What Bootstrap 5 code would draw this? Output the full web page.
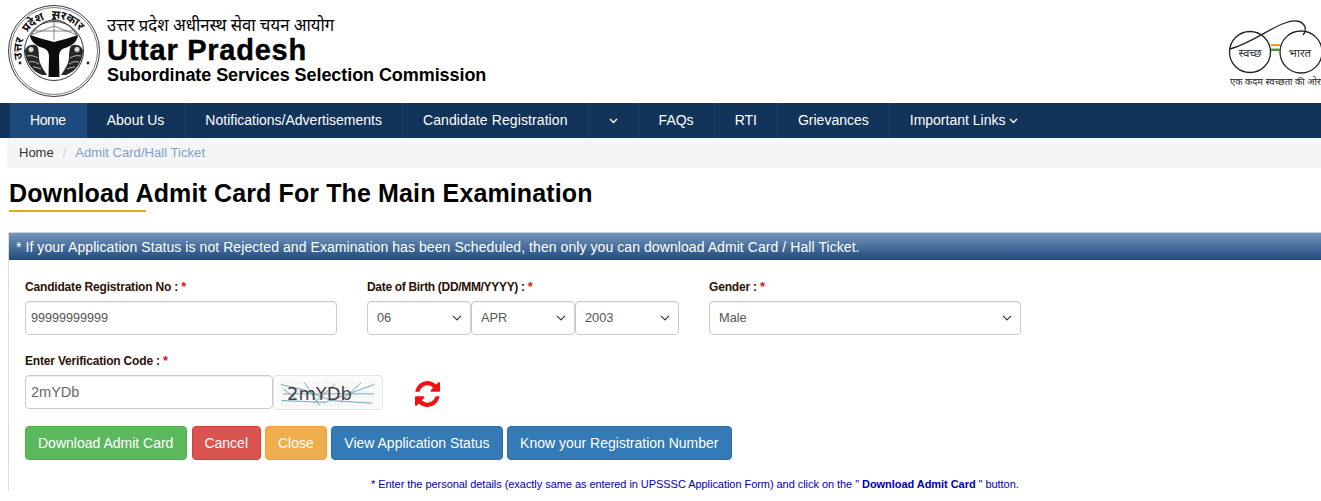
<!DOCTYPE html>
<html>

<head>
    <title>Download Admit Card</title>
    <link href="https://cdn.jsdelivr.net/npm/bootstrap@5.3.0/dist/css/bootstrap.min.css" rel="stylesheet">
    <style>
        html, body { height: 501px; overflow: hidden; }
        body { font-family: "Liberation Sans", Arial, sans-serif; font-size: 14px; color: #333; background: #fff; }

        .site-head { height: 103px; padding: 2px 0 0 5px; }
        .emblem { width: 95px; height: 96px; flex: none; }
        .head-text { margin: 11px 0 0 7px; color: #000; }
        .head-hindi { font-family: "Noto Sans", "Noto Sans CJK SC", sans-serif; font-size: 16.7px; line-height: 24px; }
        .head-state { font-size: 29px; font-weight: 700; line-height: 27px; letter-spacing: .75px; -webkit-text-stroke: .4px #000; }
        .head-org { font-size: 18px; font-weight: 700; line-height: 23px; letter-spacing: -.07px; }
        .swachh { width: 121px; height: 100px; margin-left: auto; flex: none; }

        .main-nav { background: #12335a; height: 35px; padding-left: 10px; }
        .main-nav .nav-link { color: #fff; font-size: 14px; line-height: 35px; padding: 0 20px; border-right: 1px solid #1a3f5e; white-space: nowrap; }
        .main-nav .nav-link.active { background: #1d4a7c; color: #fff; border-right-color: #1d4a7c; letter-spacing: -.4px; }
        .main-nav .nav-link.wide-text { letter-spacing: .1px; }
        .main-nav .nav-item:last-child .nav-link { border-right: 0; }
        .chev { width: 9px; height: 6px; vertical-align: 1px; }

        .crumbs { background: #f5f5f5; height: 30px; margin: 0 0 0 7px; padding: 0 12px; font-size: 13px; line-height: 30px; border-radius: 0 0 0 4px; }
        .crumbs .breadcrumb-item { line-height: 30px; color: #333; }
        .crumbs .breadcrumb-item + .breadcrumb-item { padding-left: 9px; }
        .crumbs .breadcrumb-item + .breadcrumb-item::before { color: #ccc; padding-right: 9px; }
        .crumbs .breadcrumb-item.active { color: #7da0d0; letter-spacing: .05px; }

        .page-title { margin: 0 0 0 9px; padding-top: 10px; height: 65px; margin-bottom: -1px; }
        .page-title h1 { font-size: 25px; font-weight: 700; line-height: 30px; margin: 0; color: #000; letter-spacing: .12px; }
        .title-rule { width: 137px; height: 2px; background: #e8a623; margin-top: 2px; }

        .notice-panel { margin-left: 8px; border-left: 1px solid #ddd; }
        .notice-head { height: 28px; line-height: 28px; padding-left: 7px; color: #fff; font-size: 14px; letter-spacing: .07px; background: linear-gradient(to bottom, #7495bb, #1f4b7e); border-top: 1px solid #c9d4e0; white-space: nowrap; }
        .form-area { padding: 18px 0 0 16px; }

        .fld-label { color: #2a1208; font-size: 12px; font-weight: 700; line-height: 18px; margin: 0 0 5px; display: block; letter-spacing: -.18px; }
        .fld-dob .fld-label { letter-spacing: -.32px; }
        .req { color: #e01010; font-size: 13px; letter-spacing: 0; }
        .fld-row { display: flex; margin-bottom: 17px; }
        .fld-row + .fld-row { margin-bottom: 16px; }
        .fld-reg { width: 312px; margin-right: 30px; }
        .fld-dob { width: 312px; margin-right: 30px; }
        .fld-gender { width: 312px; }
        .form-area .form-control, .form-area .form-select { height: 34px; font-size: 12.6px; color: #555; border: 1px solid #ccc; border-radius: 4px; padding: 0 5px; box-shadow: inset 0 1px 1px rgba(0,0,0,.075); }
        .form-area .form-select { font-size: 12.8px; padding-left: 9px; background-size: 14px 10px; background-position: right 6px center; }
        .dob-row { display: flex; }
        .dob-row .form-select { width: 104px; flex: none; }
        .code-row { display: flex; align-items: flex-start; }
        .form-area .code-input.form-control { width: 248px; flex: none; font-size: 14.5px; color: #666; }
        .captcha { width: 110px; height: 35px; flex: none; border: 1px solid #e4e4e4; border-radius: 4px; display: block; }
        .refresh { width: 25px; height: 26px; margin: 6px 0 0 32px; flex: none; }

        .act-btns { gap: 4.5px; }
        .act-btns .btn { font-size: 14px; height: 34px; line-height: 32px; padding: 0 12px; border-radius: 4px; color: #fff; }
        .act-btns .act-green { background: #5cb85c; border-color: #4cae4c; padding-right: 13px; }
        .act-btns .act-red { background: #d9534f; border-color: #d43f3a; padding: 0 11.5px; }
        .act-amber { background: #f0ad4e; border-color: #eea236; }
        .act-blue { background: #337ab7; border-color: #2e6da4; }
        .note-line { font-size: 11px; color: #0000b0; margin: 17px 0 0 346px; letter-spacing: -.05px; line-height: 14px; white-space: nowrap; }
    </style>
</head>

<body>
    <header class="site-head d-flex">
        <svg class="emblem" viewBox="0 0 95 96">
            <defs>
                <path id="emblemArc" d="M17.800 58 A32.500 32.500 0 1 1 80.200 58" fill="none"/>
            </defs>
            <circle cx="49" cy="49" r="45.500" fill="#fff" stroke="#222" stroke-width=".9"/>
            <circle cx="49" cy="49" r="43.500" fill="none" stroke="#222" stroke-width=".6"/>
            <circle cx="49" cy="49" r="29.500" fill="none" stroke="#222" stroke-width=".9"/>
            <text font-family="Noto Sans, sans-serif" font-size="11.500" font-weight="700" word-spacing="4" fill="#111"><textPath href="#emblemArc" startOffset="1%">उत्तर प्रदेश सरकार</textPath></text>
            <!-- bow, string and arrow -->
            <path d="M26 33 C33 22 41 18 49 18 C57 18 65 22 72 33" fill="none" stroke="#333" stroke-width="1"/>
            <path d="M26 33 L49 24 L72 33 M49 15 V38 M30 29 H68" fill="none" stroke="#555" stroke-width=".7"/>
            <path d="M46.500 18 L49 13.500 L51.500 18 Z" fill="#222"/>
            <!-- the Y band -->
            <path d="M25 33 C33 36 42 38 49 40 C56 38 65 36 73 33 C73 38 68 44 60 46 C56 47 54 50 54 55 L54.500 75 L43.500 75 L44 55 C44 50 42 47 38 46 C30 44 25 38 25 33 Z" fill="#0c0c0c"/>
            <!-- fishes -->
            <g>
                <path d="M20 50 C20 44 27 41 32 44 C35 49 33 55 35 61 C37 66 40 70 42 73 L37 73 C28 70 21 61 20 50 Z" fill="#262626"/>
                <circle cx="26" cy="47.500" r="3" fill="#ddd" stroke="#222" stroke-width=".8"/>
                <path d="M22 54 C26 53 30 54 33 56 M24 60 C28 59 31 60 34 62 M28 65 C31 65 33 66 36 67" fill="none" stroke="#ccc" stroke-width=".9"/>
            </g>
            <g transform="translate(98 0) scale(-1 1)">
                <path d="M20 50 C20 44 27 41 32 44 C35 49 33 55 35 61 C37 66 40 70 42 73 L37 73 C28 70 21 61 20 50 Z" fill="#262626"/>
                <circle cx="26" cy="47.500" r="3" fill="#ddd" stroke="#222" stroke-width=".8"/>
                <path d="M22 54 C26 53 30 54 33 56 M24 60 C28 59 31 60 34 62 M28 65 C31 65 33 66 36 67" fill="none" stroke="#ccc" stroke-width=".9"/>
            </g>
            <circle cx="15" cy="61" r="1.400" fill="#222"/>
            <circle cx="83" cy="61" r="1.400" fill="#222"/>
        </svg>
        <div class="head-text">
            <div class="head-hindi">उत्तर प्रदेश अधीनस्थ सेवा चयन आयोग</div>
            <div class="head-state">Uttar Pradesh</div>
            <div class="head-org">Subordinate Services Selection Commission</div>
        </div>
        <svg class="swachh" viewBox="0 0 121 100">
            <circle cx="50" cy="50" r="20.500" fill="none" stroke="#222" stroke-width="1.300"/>
            <circle cx="101" cy="50" r="21" fill="none" stroke="#222" stroke-width="1.300"/>
            <path d="M30 47 C50 42 70 26 85 21 C95 17 103 19 105 25 C106 29 105 31 103 33" fill="none" stroke="#222" stroke-width="1.300"/>
            <rect x="71" y="42" width="9" height="2.400" fill="#f0a030"/>
            <rect x="71" y="44.400" width="9" height="2.200" fill="#f4f4e8"/>
            <rect x="71" y="46.600" width="9" height="2.400" fill="#3c9a3c"/>
            <text x="50" y="55" text-anchor="middle" font-family="Noto Sans, sans-serif" font-size="11.500" fill="#333">स्वच्छ</text>
            <text x="100" y="55" text-anchor="middle" font-family="Noto Sans, sans-serif" font-size="11.500" fill="#333">भारत</text>
            <text x="30" y="83" font-family="Noto Sans, sans-serif" font-size="9.500" fill="#222">एक कदम स्वच्छता की ओर</text>
        </svg>
    </header>

    <nav class="main-nav">
        <ul class="nav">
            <li class="nav-item"><a class="nav-link active" href="#">Home</a></li>
            <li class="nav-item"><a class="nav-link" href="#">About Us</a></li>
            <li class="nav-item"><a class="nav-link" href="#">Notifications/Advertisements</a></li>
            <li class="nav-item"><a class="nav-link wide-text" href="#">Candidate Registration</a></li>
            <li class="nav-item"><a class="nav-link" href="#"><svg class="chev" viewBox="0 0 9 6"><path d="M1 1 L4.500 4.500 L8 1" fill="none" stroke="#fff" stroke-width="1.400"/></svg></a></li>
            <li class="nav-item"><a class="nav-link" href="#">FAQs</a></li>
            <li class="nav-item"><a class="nav-link" href="#">RTI</a></li>
            <li class="nav-item"><a class="nav-link" href="#">Grievances</a></li>
            <li class="nav-item"><a class="nav-link" href="#">Important Links <svg class="chev" viewBox="0 0 9 6"><path d="M1 1 L4.500 4.500 L8 1" fill="none" stroke="#fff" stroke-width="1.400"/></svg></a></li>
        </ul>
    </nav>

    <ol class="breadcrumb crumbs">
        <li class="breadcrumb-item">Home</li>
        <li class="breadcrumb-item active">Admit Card/Hall Ticket</li>
    </ol>

    <div class="page-title">
        <h1>Download Admit Card For The Main Examination</h1>
        <div class="title-rule"></div>
    </div>

    <section class="notice-panel">
        <div class="notice-head">* If your Application Status is not Rejected and Examination has been Scheduled, then only you can download Admit Card / Hall Ticket.</div>
        <form class="form-area">
            <div class="fld-row">
                <div class="fld-reg">
                    <label class="fld-label">Candidate Registration No : <span class="req">*</span></label>
                    <input class="form-control" type="text" value="99999999999">
                </div>
                <div class="fld-dob">
                    <label class="fld-label">Date of Birth (DD/MM/YYYY) : <span class="req">*</span></label>
                    <div class="dob-row">
                        <select class="form-select"><option>06</option></select>
                        <select class="form-select"><option>APR</option></select>
                        <select class="form-select"><option>2003</option></select>
                    </div>
                </div>
                <div class="fld-gender">
                    <label class="fld-label">Gender : <span class="req">*</span></label>
                    <select class="form-select"><option>Male</option></select>
                </div>
            </div>
            <div class="fld-row">
                <div>
                    <label class="fld-label">Enter Verification Code : <span class="req">*</span></label>
                    <div class="code-row">
                        <input class="form-control code-input" type="text" value="2mYDb">
                        <svg class="captcha" viewBox="0 0 110 35">
                            <rect width="110" height="35" fill="#fbfbfb"/>
                            <path d="M6 7 H104 M6 12 H104 M6 17 H104 M6 22 H104 M6 27 H104 M6 31 H104" fill="none" stroke="#d8cfd0" stroke-width="1" stroke-dasharray="1 3"/>
                            <path d="M5 9 L30 15 L58 26 L102 29 M6 26 L52 28 L104 9 M7 19 H104 M68 28 L90 7 M30 7 L46 31 M40 29 L62 9 M8 14 L22 25" fill="none" stroke="#6fa2b6" stroke-width="1"/>
                            <text x="46" y="25" text-anchor="middle" font-family="DejaVu Sans, sans-serif" font-size="19" fill="#444">2mYDb</text>
                        </svg>
                        <svg class="refresh" viewBox="128 128 1536 1536" preserveAspectRatio="none">
                            <path d="M1639 1056q0 5-1 7-64 268-268 434.500t-478 166.500q-146 0-282.500-55t-243.500-157l-129 129q-19 19-45 19t-45-19-19-45v-448q0-26 19-45t45-19h448q26 0 45 19t19 45-19 45l-137 137q71 66 161 102t187 36q134 0 250-65t186-179q11-17 53-117 8-23 30-23h192q13 0 22.500 9.500t9.500 22.500zm25-800v448q0 26-19 45t-45 19h-448q-26 0-45-19t-19-45 19-45l138-138q-148-137-349-137-134 0-250 65t-186 179q-11 17-53 117-8 23-30 23h-199q-13 0-22.500-9.500t-9.500-22.500v-7q65-268 270-434.500t480-166.500q146 0 284 55.500t245 156.500l130-129q19-19 45-19t45 19 19 45z" fill="#f01212"/>
                        </svg>
                    </div>
                </div>
            </div>
            <div class="d-flex act-btns">
                <button type="button" class="btn act-green">Download Admit Card</button>
                <button type="button" class="btn act-red">Cancel</button>
                <button type="button" class="btn act-amber">Close</button>
                <button type="button" class="btn act-blue">View Application Status</button>
                <button type="button" class="btn act-blue">Know your Registration Number</button>
            </div>
            <p class="note-line">* Enter the personal details (exactly same as entered in UPSSSC Application Form) and click on the " <b>Download Admit Card</b> " button.</p>
        </form>
    </section>

    <script src="https://cdn.jsdelivr.net/npm/bootstrap@5.3.0/dist/js/bootstrap.bundle.min.js"></script>
</body>

</html>
